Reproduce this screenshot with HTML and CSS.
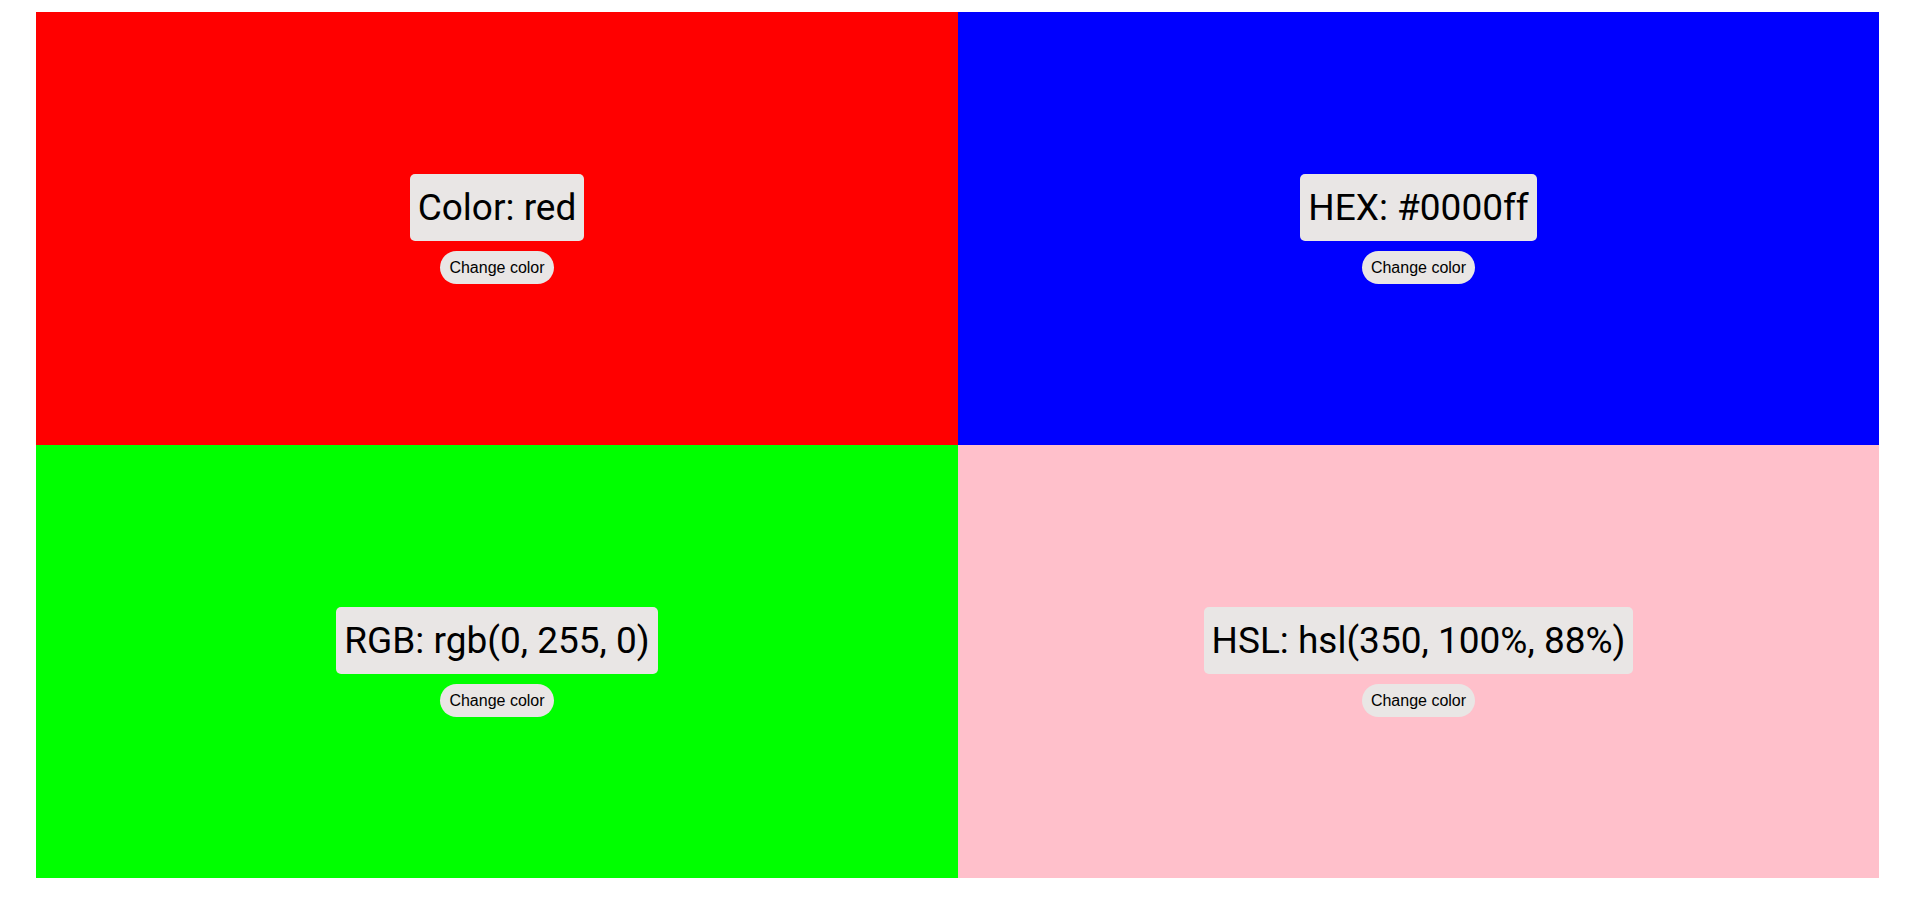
FILE: index.html
```html
<!DOCTYPE html>
<html lang="en">
<head>
<meta charset="utf-8">
<title>Colors</title>
<link rel="stylesheet" href="styles.css">
</head>
<body>
<main class="grid">
  <section class="panel panel-red">
    <div class="label">Color: red</div>
    <button class="btn" type="button">Change color</button>
  </section>
  <section class="panel panel-blue">
    <div class="label">HEX: #0000ff</div>
    <button class="btn" type="button">Change color</button>
  </section>
  <section class="panel panel-green">
    <div class="label">RGB: rgb(0, 255, 0)</div>
    <button class="btn" type="button">Change color</button>
  </section>
  <section class="panel panel-pink">
    <div class="label">HSL: hsl(350, 100%, 88%)</div>
    <button class="btn" type="button">Change color</button>
  </section>
</main>
</body>
</html>
```

FILE: styles.css
```css
html, body {
  margin: 0;
  padding: 0;
  background: #ffffff;
}

body {
  padding: 12px 33px 21px 36px;
  font-family: Roboto, "Liberation Sans", sans-serif;
}

.grid {
  display: grid;
  grid-template-columns: 922px 921px;
  grid-template-rows: 433px 433px;
}

.panel {
  display: flex;
  flex-direction: column;
  align-items: center;
  justify-content: center;
  gap: 10px;
}

.panel-red { background: #ff0000; }
.panel-blue { background: #0000ff; }
.panel-green { background: #00ff00; }
.panel-pink { background: #ffc0cb; }

.label {
  background: #e9e6e5;
  color: #000;
  font-family: Roboto, sans-serif;
  font-size: 37px;
  line-height: 51px;
  padding: 8px 8px;
  border-radius: 5px;
}

.btn {
  background: #e9e6e5;
  color: #000;
  border: none;
  border-radius: 17px;
  font-family: "Liberation Sans", Arial, sans-serif;
  font-size: 16px;
  line-height: 19px;
  padding: 7px 9px;
  cursor: pointer;
}
```
